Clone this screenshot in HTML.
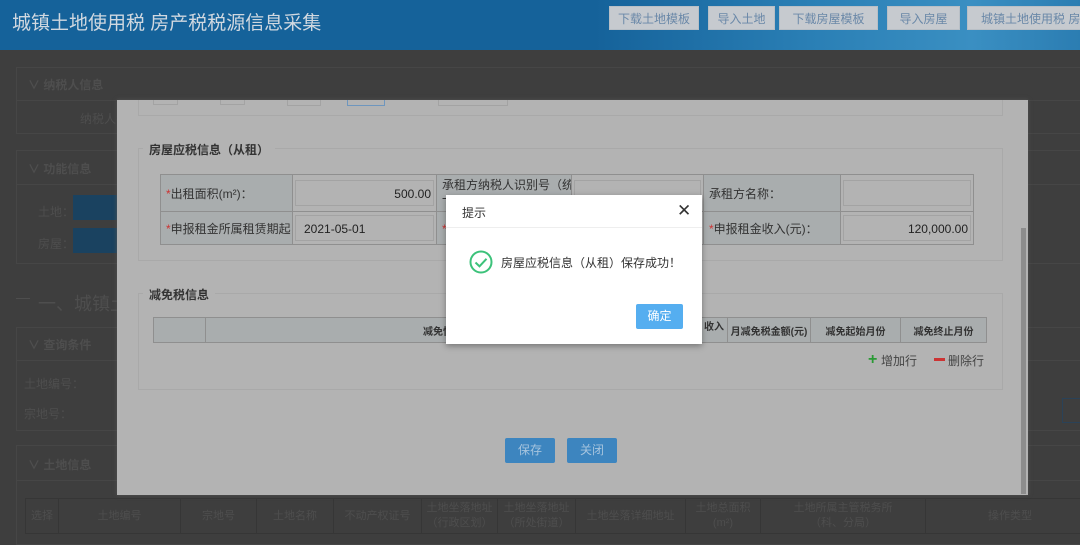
<!DOCTYPE html>
<html><head><meta charset="utf-8"><style>
*{margin:0;padding:0;box-sizing:border-box}
body{width:1080px;height:537px;overflow:hidden;background:#3e3e3e;font-family:"Liberation Sans","Noto Sans CJK SC",sans-serif;position:relative;color:#555;font-size:12px}
.a{position:absolute}
.hdr{left:0;top:0;width:1080px;height:50px;background:linear-gradient(90deg,#15629a 0%,#15629a 55%,#2a7fb5 75%,#3a8fc2 90%,#2b7db2 100%)}
.ttl{left:12px;top:8px;font-size:19px;color:#d0d8e0;white-space:nowrap}
.hb{top:6px;height:24px;background:#c6cacf;color:#6a88a8;font-size:12px;text-align:center;line-height:24px;border:1px solid #b8bfc6;white-space:nowrap;overflow:hidden}
.sec{border:1px solid #464646;background:#3e3e3e}
.dk{color:#4e4e4e;font-size:12px;white-space:nowrap}
.modal{left:117px;top:100px;width:911px;height:395px;background:#b3b3b3;box-shadow:0 0 4px #555}
.fs{border:1px solid #a9a9a9}
.leg{background:#b3b3b3;padding:0 6px;font-weight:bold;color:#333;font-size:12px}
table{border-collapse:collapse;position:absolute;table-layout:fixed}
td{border:1px solid #8f8f8f;font-size:12px;color:#333;white-space:nowrap;overflow:hidden}
.lb{background:#a9adae;padding-left:5px}
.ip{background:#b3b3b3;padding:2px}
.box{border:1px solid #a3a3a3;height:26px;line-height:26px;padding:0 2px;font-size:12px;color:#222}
.th td{background:#a9adae;text-align:center;font-weight:bold;color:#333;font-size:10px}
.btn{top:438px;width:50px;height:25px;background:#3d85bf;color:#a6c4de;text-align:center;line-height:25px;font-size:12px;border-radius:2px}
.dlg{left:446px;top:195px;width:256px;height:149px;background:#fff;box-shadow:0 2px 6px rgba(0,0,0,.35)}
.red{color:#c33}
.bt td{border:1px solid #363636;color:#4e4e4e;text-align:center;font-size:11px;background:#3e3e3e;line-height:15px}
</style></head><body>
<div class="a hdr"></div>
<div class="a ttl">城镇土地使用税 房产税税源信息采集</div>
<div class="a hb" style="left:609px;width:90px">下载土地模板</div>
<div class="a hb" style="left:708px;width:67px">导入土地</div>
<div class="a hb" style="left:779px;width:99px">下载房屋模板</div>
<div class="a hb" style="left:887px;width:73px">导入房屋</div>
<div class="a hb" style="left:967px;width:120px;text-align:left;padding-left:13px">城镇土地使用税 房产</div>

<div class="a sec" style="left:16px;top:67px;width:1070px;height:67px"></div>
<div class="a dk" style="left:28px;top:76px;font-weight:bold">∨ 纳税人信息</div>
<div class="a" style="left:16px;top:100px;width:1070px;border-top:1px solid #464646"></div>
<div class="a dk" style="left:80px;top:110px">纳税人名</div>
<div class="a sec" style="left:16px;top:150px;width:1070px;height:114px"></div>
<div class="a dk" style="left:28px;top:160px;font-weight:bold">∨ 功能信息</div>
<div class="a" style="left:16px;top:184px;width:1070px;border-top:1px solid #464646"></div>
<div class="a dk" style="left:38px;top:203px">土地：</div>
<div class="a" style="left:73px;top:195px;width:50px;height:25px;background:#1a4260"></div>
<div class="a dk" style="left:38px;top:235px">房屋：</div>
<div class="a" style="left:73px;top:228px;width:50px;height:25px;background:#1a4260"></div>
<div class="a" style="left:16px;top:298px;width:14px;border-top:1px solid #4e4e4e"></div>
<div class="a dk" style="left:38px;top:290px;font-size:18px">一、城镇土</div>
<div class="a sec" style="left:16px;top:327px;width:1070px;height:104px"></div>
<div class="a dk" style="left:28px;top:336px;font-weight:bold">∨ 查询条件</div>
<div class="a" style="left:16px;top:360px;width:1070px;border-top:1px solid #464646"></div>
<div class="a dk" style="left:24px;top:375px">土地编号：</div>
<div class="a dk" style="left:24px;top:405px">宗地号：</div>
<div class="a" style="left:1062px;top:398px;width:30px;height:25px;border:1px solid #2a4258"></div>
<div class="a sec" style="left:16px;top:445px;width:1070px;height:100px"></div>
<div class="a dk" style="left:28px;top:456px;font-weight:bold">∨ 土地信息</div>
<div class="a" style="left:16px;top:480px;width:1070px;border-top:1px solid #464646"></div>
<table class="bt" style="left:25px;top:498px;width:1070px;height:36px">
<tr><td style="width:33px">选择</td><td style="width:122px">土地编号</td><td style="width:76px">宗地号</td><td style="width:77px">土地名称</td><td style="width:88px">不动产权证号</td><td style="width:76px">土地坐落地址<br>（行政区划）</td><td style="width:78px">土地坐落地址<br>（所处街道）</td><td style="width:110px">土地坐落详细地址</td><td style="width:75px">土地总面积<br>(m²)</td><td style="width:165px">土地所属主管税务所<br>（科、分局）</td><td>操作类型</td></tr></table>

<div class="a modal"></div>
<div class="a" style="left:1021px;top:228px;width:5px;height:266px;background:#8d8d8d"></div>
<div class="a fs" style="left:138px;top:100px;width:865px;height:16px;border-top:none"></div>
<div class="a" style="left:153px;top:100px;width:25px;height:5px;border:1px solid #a3a3a3;border-top:none"></div>
<div class="a" style="left:220px;top:100px;width:25px;height:5px;border:1px solid #a3a3a3;border-top:none"></div>
<div class="a" style="left:287px;top:100px;width:34px;height:6px;border:1px solid #a3a3a3;border-top:none"></div>
<div class="a" style="left:347px;top:100px;width:38px;height:6px;border:1px solid #6e96be;border-top:none"></div>
<div class="a" style="left:438px;top:100px;width:70px;height:6px;border:1px solid #a3a3a3;border-top:none"></div>

<div class="a fs" style="left:138px;top:148px;width:865px;height:113px"></div>
<div class="a leg" style="left:143px;top:141px">房屋应税信息（从租）</div>
<table style="left:160px;top:174px;width:814px;height:70px">
<colgroup><col style="width:132px"><col style="width:144px"><col style="width:135px"><col style="width:132px"><col style="width:137px"><col></colgroup>
<tr style="height:37px"><td class="lb"><span class="red">*</span>出租面积(m²)：</td><td class="ip"><div class="box" style="text-align:right">500.00</div></td><td class="lb" style="line-height:14px;vertical-align:top;padding-top:3px">承租方纳税人识别号（统<br>一</td><td class="ip"><div class="box"></div></td><td class="lb">承租方名称：</td><td class="ip"><div class="box"></div></td></tr>
<tr style="height:33px"><td class="lb"><span class="red">*</span>申报租金所属租赁期起：</td><td class="ip"><div class="box" style="padding-left:8px">2021-05-01</div></td><td class="lb"><span class="red">*</span>申</td><td class="ip"><div class="box"></div></td><td class="lb"><span class="red">*</span>申报租金收入(元)：</td><td class="ip"><div class="box" style="text-align:right">120,000.00</div></td></tr>
</table>

<div class="a fs" style="left:138px;top:293px;width:865px;height:97px"></div>
<div class="a leg" style="left:143px;top:286px">减免税信息</div>
<table class="th" style="left:153px;top:317px;width:834px;height:26px">
<colgroup><col style="width:52px"><col style="width:495px"><col style="width:27px"><col style="width:83px"><col style="width:90px"><col></colgroup>
<tr><td></td><td>减免性质代码</td><td style="vertical-align:top">收入</td><td>月减免税金额(元)</td><td>减免起始月份</td><td>减免终止月份</td></tr></table>
<div class="a" style="left:868px;top:351px;color:#2a9a35;font-size:16px;font-weight:bold">+</div>
<div class="a" style="left:881px;top:352px;color:#444;font-size:12px">增加行</div>
<div class="a" style="left:934px;top:358px;width:11px;height:3px;background:#c33"></div>
<div class="a" style="left:948px;top:352px;color:#444;font-size:12px">删除行</div>
<div class="a btn" style="left:505px">保存</div>
<div class="a btn" style="left:567px">关闭</div>

<div class="a dlg"></div>
<div class="a" style="left:462px;top:204px;font-size:12px;color:#333">提示</div>
<div class="a" style="left:677px;top:201px;font-size:17px;color:#333">✕</div>
<div class="a" style="left:446px;top:227px;width:256px;border-top:1px solid #eee"></div>
<svg class="a" style="left:469px;top:250px" width="24" height="24" viewBox="0 0 24 24"><circle cx="12" cy="12" r="10.5" fill="none" stroke="#3cc27a" stroke-width="2"/><path d="M6.5 12.5l4 3.8 7-7.5" fill="none" stroke="#3cc27a" stroke-width="2"/></svg>
<div class="a" style="left:501px;top:254px;font-size:12px;color:#333">房屋应税信息（从租）保存成功！</div>
<div class="a" style="left:636px;top:304px;width:47px;height:25px;background:#55aef0;color:#fff;text-align:center;line-height:25px;font-size:12px;border-radius:2px">确定</div>
</body></html>
